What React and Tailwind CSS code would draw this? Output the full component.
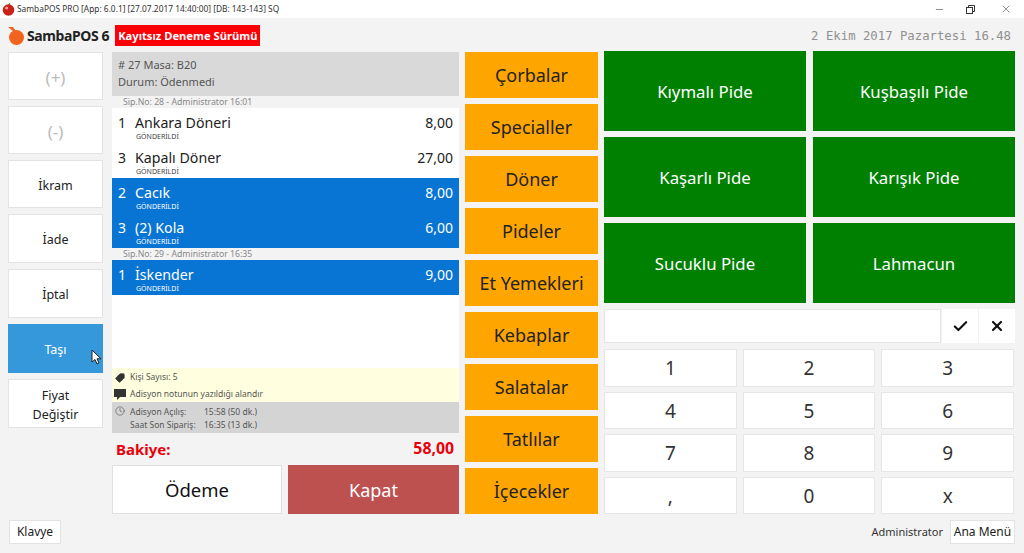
import { Check, X, Minus, Tag, Clock } from "lucide-react";

const SIDE_BUTTONS = [
  { label: "(+)", muted: true, h: "h-[48px]" },
  { label: "(-)", muted: true, h: "h-[48px]" },
  { label: "İkram", h: "h-[48px]" },
  { label: "İade", h: "h-[49px]" },
  { label: "İptal", h: "h-[49px]" },
  { label: "Taşı", active: true, h: "h-[49px]" },
  { label: "Fiyat Değiştir", h: "h-[49px]" },
];

const CATEGORIES = ["Çorbalar", "Specialler", "Döner", "Pideler", "Et Yemekleri", "Kebaplar", "Salatalar", "Tatlılar", "İçecekler"];
const PRODUCTS = ["Kıymalı Pide", "Kuşbaşılı Pide", "Kaşarlı Pide", "Karışık Pide", "Sucuklu Pide", "Lahmacun"];
const KEYS = ["1", "2", "3", "4", "5", "6", "7", "8", "9", ",", "0", "x"];

function OrderRow({ qty, name, price, selected }) {
  return (
    <div className={`h-[35px] flex pl-[6px] pr-[6px] ${selected ? "bg-[#0874d4] text-white" : "bg-white text-[#222]"}`}>
      <span className="w-[17px] text-[14px] leading-[20px] pt-[5px]">{qty}</span>
      <div className="flex-1 pt-[5px]">
        <div className="text-[14.2px] leading-[20px]">{name}</div>
        <div className={`text-[7px] leading-[8px] ml-[1px] ${selected ? "text-white" : "text-[#444]"}`}>GÖNDERİLDİ</div>
      </div>
      <span className="text-[14px] leading-[20px] pt-[5px]">{price}</span>
    </div>
  );
}

function SipHeader({ children }) {
  return <div className="h-[12px] bg-[#f3f3f3] pl-[11px] text-[8.7px] leading-[12px] text-[#888]">{children}</div>;
}

export default function App() {
  return (
    <div className="w-[1024px] h-[553px] bg-[#f3f3f3] flex flex-col overflow-hidden font-['Noto_Sans',sans-serif] text-[#222]">
      {/* Title bar */}
      <div className="h-[18px] bg-white flex items-center pl-[2px]">
        <svg width="13" height="13" viewBox="0 0 13 13">
          <circle cx="6.5" cy="7" r="5.8" fill="#c9201a" />
          <circle cx="4.6" cy="5" r="1.6" fill="#f29a8c" />
          <path d="M6.5 2 L8 0.5" stroke="#4d7a1e" strokeWidth="1.2" />
        </svg>
        <span className="ml-[2px] text-[8.35px] text-[#333]">SambaPOS PRO [App: 6.0.1] [27.07.2017 14:40:00] [DB: 143-143] SQ</span>
        <div className="ml-auto flex items-center text-[#333]">
          <Minus size={11} strokeWidth={1.2} className="mr-[21px]" />
          <svg width="9" height="9" viewBox="0 0 9 9" fill="none" stroke="#333" className="mr-[25px]">
            <rect x="0.5" y="2.5" width="6" height="6" />
            <path d="M2.5 2.5 V0.5 H8.5 V6.5 H6.5" />
          </svg>
          <X size={12} strokeWidth={1.1} className="mr-[12px]" />
        </div>
      </div>

      {/* Header */}
      <div className="h-[33px] flex items-center pl-[7px] pr-[13px] pt-[2px]">
        <svg width="19" height="20" viewBox="0 0 19 20">
          <path d="M1 1 L6 1 L9 5 L7 6 Z" fill="#e8662a" />
          <circle cx="9.5" cy="11.5" r="7.5" fill="#f0641e" />
        </svg>
        <span className="ml-[1px] text-[14px] font-bold tracking-[-0.4px] text-[#222]">SambaPOS 6</span>
        <span className="ml-[6px] h-[21px] px-[3px] bg-[#fb0007] text-white text-[11.2px] font-bold leading-[21px]">Kayıtsız Deneme Sürümü</span>
        <span className="ml-auto mt-[2px] font-['DejaVu_Sans_Mono',monospace] text-[12.3px] text-[#909090]">2 Ekim 2017 Pazartesi 16.48</span>
      </div>

      {/* Main area */}
      <div className="h-[463px] flex pl-[8px] pr-[9px]">
        {/* Action buttons */}
        <div className="w-[95px] flex flex-col gap-[6px] pt-[1px]">
          {SIDE_BUTTONS.map((b) => (
            <div
              key={b.label}
              className={`${b.h} relative flex items-center justify-center text-center leading-[19px] px-3 pt-[2px] border ${
                b.active ? "bg-[#3498db] border-[#3498db] text-white" : "bg-white border-[#e3e3e3]"
              } ${b.muted ? "text-[#bbb] text-[17px]" : "text-[12.5px]"}`}
            >
              {b.label}
              {b.active && (
                <svg width="11" height="16" viewBox="0 0 11 16" className="absolute right-[0px] top-[24px]">
                  <path d="M1 1 V13 L4 10.5 L6 15 L8 14 L6 9.8 H10 Z" fill="#fff" stroke="#222" strokeWidth="1" />
                </svg>
              )}
            </div>
          ))}
        </div>

        {/* Ticket */}
        <div className="w-[347px] ml-[9px] flex flex-col pt-[1px]">
          <div className="h-[44px] bg-[#d9d9d9] px-[6px] pt-[4px] text-[11px] leading-[17px] text-[#555]">
            <div># 27 Masa: B20</div>
            <div>Durum: Ödenmedi</div>
          </div>
          <div className="h-[272px] bg-white flex flex-col">
            <SipHeader>Sip.No: 28 - Administrator 16:01</SipHeader>
            <OrderRow qty="1" name="Ankara Döneri" price="8,00" />
            <OrderRow qty="3" name="Kapalı Döner" price="27,00" />
            <OrderRow qty="2" name="Cacık" price="8,00" selected />
            <OrderRow qty="3" name="(2) Kola" price="6,00" selected />
            <SipHeader>Sip.No: 29 - Administrator 16:35</SipHeader>
            <OrderRow qty="1" name="İskender" price="9,00" selected />
          </div>
          <div className="h-[34px] bg-[#ffffdf] text-[8.5px] text-[#555] flex flex-col pt-[1px]">
            <div className="h-[17px] flex items-center pl-[3px]">
              <Tag size={10} fill="#333" stroke="#333" className="rotate-90" />
              <span className="ml-[5px]">Kişi Sayısı: 5</span>
            </div>
            <div className="h-[16px] flex items-center pl-[2px]">
              <svg width="12" height="11" viewBox="0 0 12 11">
                <path d="M0 0 H12 V8 H6 L3 11 V8 H0 Z" fill="#333" />
              </svg>
              <span className="ml-[4px]">Adisyon notunun yazıldığı alandır</span>
            </div>
          </div>
          <div className="h-[31px] bg-[#d4d4d4] flex text-[8.5px] leading-[13px] text-[#555] pt-[3px]">
            <Clock size={10} strokeWidth={1.5} className="ml-[3px] mt-[1px]" />
            <div className="ml-[5px] w-[74px]">
              <div>Adisyon Açılış:</div>
              <div>Saat Son Sipariş:</div>
            </div>
            <div>
              <div>15:58 (50 dk.)</div>
              <div>16:35 (13 dk.)</div>
            </div>
          </div>
          <div className="h-[32px] flex items-center justify-between px-[4px] font-bold text-[#e8000b]">
            <span className="text-[15px]">Bakiye:</span>
            <span className="mr-[1px] text-[15.8px]">58,00</span>
          </div>
          <div className="h-[49px] flex gap-[6px]">
            <div className="w-[170px] bg-white border border-[#e0e0e0] flex items-center justify-center pt-[1px] text-[18.5px] text-[#111]">Ödeme</div>
            <div className="flex-1 bg-[#bd5150] flex items-center justify-center pt-[1px] text-[18px] text-white">Kapat</div>
          </div>
        </div>

        {/* Categories */}
        <div className="w-[133px] ml-[6px] flex flex-col gap-[6px] pt-[1px]">
          {CATEGORIES.map((c) => (
            <div key={c} className="h-[46px] bg-[#ffa500] flex items-center justify-center pt-[1px] text-[18px] text-[#222]">
              {c}
            </div>
          ))}
        </div>

        {/* Products and keypad */}
        <div className="w-[411px] ml-[6px] flex flex-col">
          <div className="grid grid-cols-2 gap-x-[7px] gap-y-[6px]">
            {PRODUCTS.map((p) => (
              <div key={p} className="h-[80px] bg-[#008000] flex items-center justify-center pt-[2px] text-[16.8px] text-white">
                {p}
              </div>
            ))}
          </div>
          <div className="mt-[6px] h-[34px] shrink-0 flex gap-[1px]">
            <div className="w-[337px] bg-white border border-[#e6e6e6]" />
            <div className="w-[36px] bg-white flex items-center justify-center">
              <Check size={17} strokeWidth={3} className="text-[#111]" />
            </div>
            <div className="w-[36px] bg-white flex items-center justify-center">
              <X size={16} strokeWidth={3.2} className="text-[#111]" />
            </div>
          </div>
          <div className="mt-[6px] grid grid-cols-3 gap-x-[6px] gap-y-[5px] pr-[1px]">
            {KEYS.map((k) => (
              <div key={k} className="h-[37.5px] bg-white border border-[#e6e6e6] flex items-center justify-center pt-[1px] text-[19px] text-[#333]">
                {k}
              </div>
            ))}
          </div>
        </div>
      </div>

      {/* Footer */}
      <div className="flex-1 flex items-start pl-[9px] pr-[9px] pt-[6px]">
        <div className="w-[52px] h-[24px] bg-white border border-[#e3e3e3] flex items-center justify-center text-[12px]">Klavye</div>
        <span className="ml-auto text-[11px] leading-[24px] text-[#333]">Administrator</span>
        <div className="ml-[7px] w-[65px] h-[24px] bg-white border border-[#e3e3e3] flex items-center justify-center text-[12px]">Ana Menü</div>
      </div>
    </div>
  );
}
